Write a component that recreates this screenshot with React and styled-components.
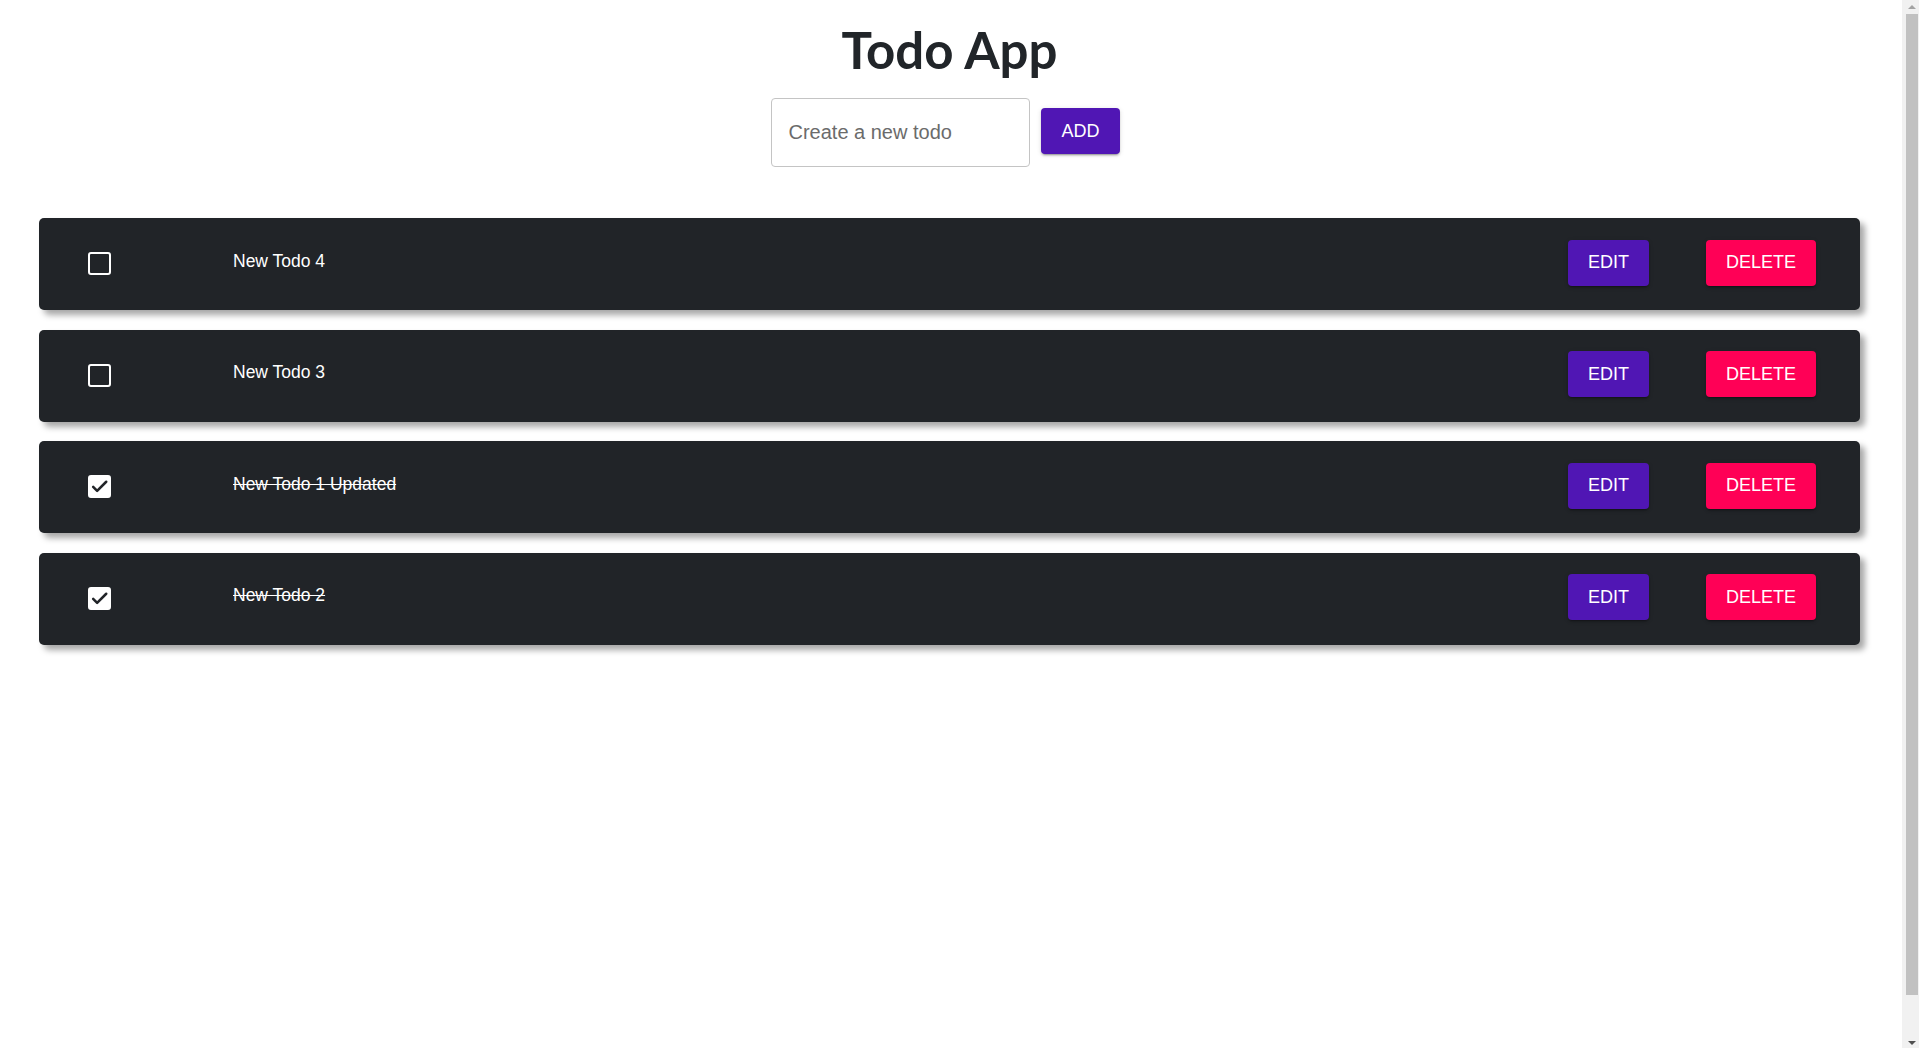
import React, { useState } from "react";
import styled, { createGlobalStyle } from "styled-components";

const GlobalStyle = createGlobalStyle`
  * { box-sizing: border-box; }
  body {
    margin: 0;
    background: #ffffff;
    font-family: "Liberation Sans", Arial, sans-serif;
  }
`;

const initialTodos = [
  { id: 4, text: "New Todo 4", done: false },
  { id: 3, text: "New Todo 3", done: false },
  { id: 1, text: "New Todo 1 Updated", done: true },
  { id: 2, text: "New Todo 2", done: true },
];

const App = () => {
  const [todos, setTodos] = useState(initialTodos);
  const [value, setValue] = useState("");

  const toggle = (id) =>
    setTodos(todos.map((t) => (t.id === id ? { ...t, done: !t.done } : t)));

  const remove = (id) => setTodos(todos.filter((t) => t.id !== id));

  const add = () => {
    if (!value.trim()) return;
    setTodos([{ id: Date.now(), text: value, done: false }, ...todos]);
    setValue("");
  };

  return (
    <Wrapper>
      <GlobalStyle />
      <Title>Todo App</Title>
      <Form
        onSubmit={(e) => {
          e.preventDefault();
          add();
        }}
      >
        <Input
          placeholder="Create a new todo"
          value={value}
          onChange={(e) => setValue(e.target.value)}
        />
        <AddButton type="submit" $color="#5016b4">
          ADD
        </AddButton>
      </Form>
      <List>
        {todos.map((todo) => (
          <Row key={todo.id}>
            <Check $checked={todo.done} onClick={() => toggle(todo.id)}>
              {todo.done && (
                <svg width="19" height="19" viewBox="0 0 24 24">
                  <path
                    d="M4 12.5l5 5L20.5 6"
                    fill="none"
                    stroke="#212428"
                    strokeWidth="3.2"
                    strokeLinecap="round"
                    strokeLinejoin="round"
                  />
                </svg>
              )}
            </Check>
            <Text $done={todo.done}>{todo.text}</Text>
            <Actions>
              <Button $color="#5016b4">EDIT</Button>
              <Button $color="#ff0056" onClick={() => remove(todo.id)}>
                DELETE
              </Button>
            </Actions>
          </Row>
        ))}
      </List>
      <Scrollbar>
        <Arrow />
        <Thumb />
        <Arrow $down />
      </Scrollbar>
    </Wrapper>
  );
};

const Wrapper = styled.div`
  min-height: 100vh;
  padding: 18px 59px 0 39px;
`;

const Title = styled.h1`
  margin: 0;
  text-align: center;
  font-family: Lato, "Open Sans", sans-serif;
  font-weight: 700;
  font-size: 51px;
  line-height: 64px;
  color: #212529;
`;

const Form = styled.form`
  display: flex;
  justify-content: center;
  align-items: center;
  gap: 11px;
  margin-top: 16px;
  padding-right: 8px;
`;

const Input = styled.input`
  width: 259px;
  height: 69px;
  padding: 0 16px;
  border: 1px solid #c4c4c4;
  border-radius: 4px;
  font-family: "Liberation Sans", Arial, sans-serif;
  font-size: 20px;
  color: #222;
  outline: none;

  &::placeholder {
    color: #6b6b6b;
  }
`;

const Button = styled.button`
  height: 46px;
  padding: 0 20px;
  border: none;
  border-radius: 4px;
  background: ${(p) => p.$color};
  color: #ffffff;
  font-family: "Liberation Sans", Arial, sans-serif;
  font-size: 18px;
  cursor: pointer;
  box-shadow: 0 3px 1px -2px rgba(0, 0, 0, 0.2), 0 2px 2px 0 rgba(0, 0, 0, 0.14),
    0 1px 5px 0 rgba(0, 0, 0, 0.12);
`;

const AddButton = styled(Button)`
  margin-bottom: 3px;
`;

const List = styled.div`
  display: flex;
  flex-direction: column;
  gap: 19.5px;
  margin-top: 51px;
`;

const Row = styled.div`
  display: flex;
  align-items: center;
  height: 92px;
  padding: 0 44px 0 49px;
  background: #212428;
  border-radius: 5px;
  box-shadow: 5px 5px 6px rgba(0, 0, 0, 0.35);
`;

const Check = styled.div`
  width: 23px;
  height: 23px;
  flex-shrink: 0;
  display: flex;
  align-items: center;
  justify-content: center;
  margin-top: -1px;
  border: 2px solid #ffffff;
  border-radius: 3px;
  background: ${(p) => (p.$checked ? "#ffffff" : "transparent")};
  cursor: pointer;
`;

const Text = styled.span`
  flex: 1;
  margin: 0 0 6px 122px;
  color: #ffffff;
  font-size: 17.5px;
  text-decoration: ${(p) => (p.$done ? "line-through" : "none")};
`;

const Actions = styled.div`
  display: flex;
  align-items: center;
  gap: 57px;
  margin-top: -3px;
`;

const Scrollbar = styled.div`
  position: fixed;
  top: 0;
  right: 0;
  bottom: 0;
  width: 17px;
  display: flex;
  flex-direction: column;
  align-items: center;
  padding-left: 2px;
  background: #f1f1f1;
`;

const Thumb = styled.div`
  height: 981px;
  width: 12px;
  margin-top: 5px;
  background: #c1c1c1;
`;

const Arrow = styled.div`
  width: 0;
  height: 0;
  margin-top: ${(p) => (p.$down ? "auto" : "5px")};
  margin-bottom: ${(p) => (p.$down ? "3px" : "0")};
  border-left: 4px solid transparent;
  border-right: 4px solid transparent;
  ${(p) =>
    p.$down
      ? "border-top: 4px solid #505050;"
      : "border-bottom: 4px solid #a3a3a3;"}
`;

export default App;
